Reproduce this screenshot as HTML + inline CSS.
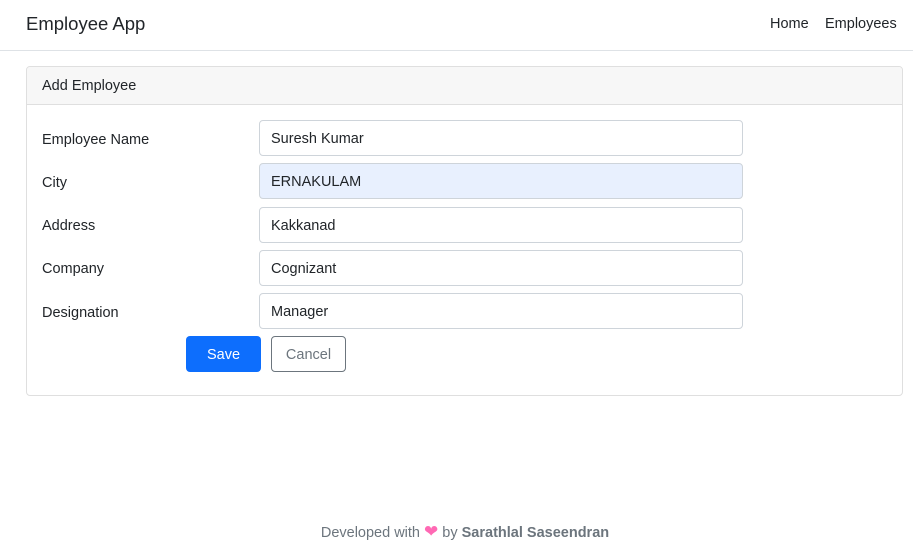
<!DOCTYPE html>
<html><head><style>
*{box-sizing:border-box;margin:0;padding:0}
body{width:913px;height:553px;background:#fff;font-family:"Liberation Sans",sans-serif;color:#212529;position:relative;overflow:hidden;font-size:14.5px}
.a{position:absolute}
.nav{left:0;top:0;width:913px;height:51px;border-bottom:1px solid #dee2e6}
.card{left:26px;top:66px;width:877px;height:330px;border:1px solid #dfdfdf;border-radius:4px;overflow:hidden}
.hd{left:0;top:0;width:100%;height:38px;background:#f7f7f7;border-bottom:1px solid #dfdfdf}
.inp{left:259px;width:484px;height:36px;border:1px solid #ced4da;border-radius:4px;padding:0 11px;line-height:36px}
.lbl{left:42px;line-height:20px}
</style></head><body>
<div class="a nav"></div>
<div class="a" style="left:26px;top:13px;font-size:18.5px">Employee App</div>
<div class="a" style="left:770px;top:16px">Home</div>
<div class="a" style="left:825px;top:16px">Employees</div>
<div class="a card"><div class="a hd"></div><div class="a" style="left:15px;top:11px">Add Employee</div></div>
<div class="a lbl" style="top:130px">Employee Name</div>
<div class="a lbl" style="top:173px">City</div>
<div class="a lbl" style="top:216px">Address</div>
<div class="a lbl" style="top:259px">Company</div>
<div class="a lbl" style="top:303px">Designation</div>
<div class="a inp" style="top:120px">Suresh Kumar</div>
<div class="a inp" style="top:163px;background:#e8f0fe">ERNAKULAM</div>
<div class="a inp" style="top:207px">Kakkanad</div>
<div class="a inp" style="top:250px">Cognizant</div>
<div class="a inp" style="top:293px">Manager</div>
<div class="a" style="left:186px;top:336px;width:75px;height:36px;background:#0d6efd;border-radius:4px;color:#fff;text-align:center;line-height:38px">Save</div>
<div class="a" style="left:271px;top:336px;width:75px;height:36px;border:1px solid #6c757d;border-radius:4px;color:#6c757d;text-align:center;line-height:36px">Cancel</div>
<div class="a" style="left:0;width:930px;top:525px;text-align:center;color:#6c757d">Developed with <span style="color:#ff69b4;font-size:17px;line-height:14px">&#10084;</span> by <b>Sarathlal Saseendran</b></div>
</body></html>
